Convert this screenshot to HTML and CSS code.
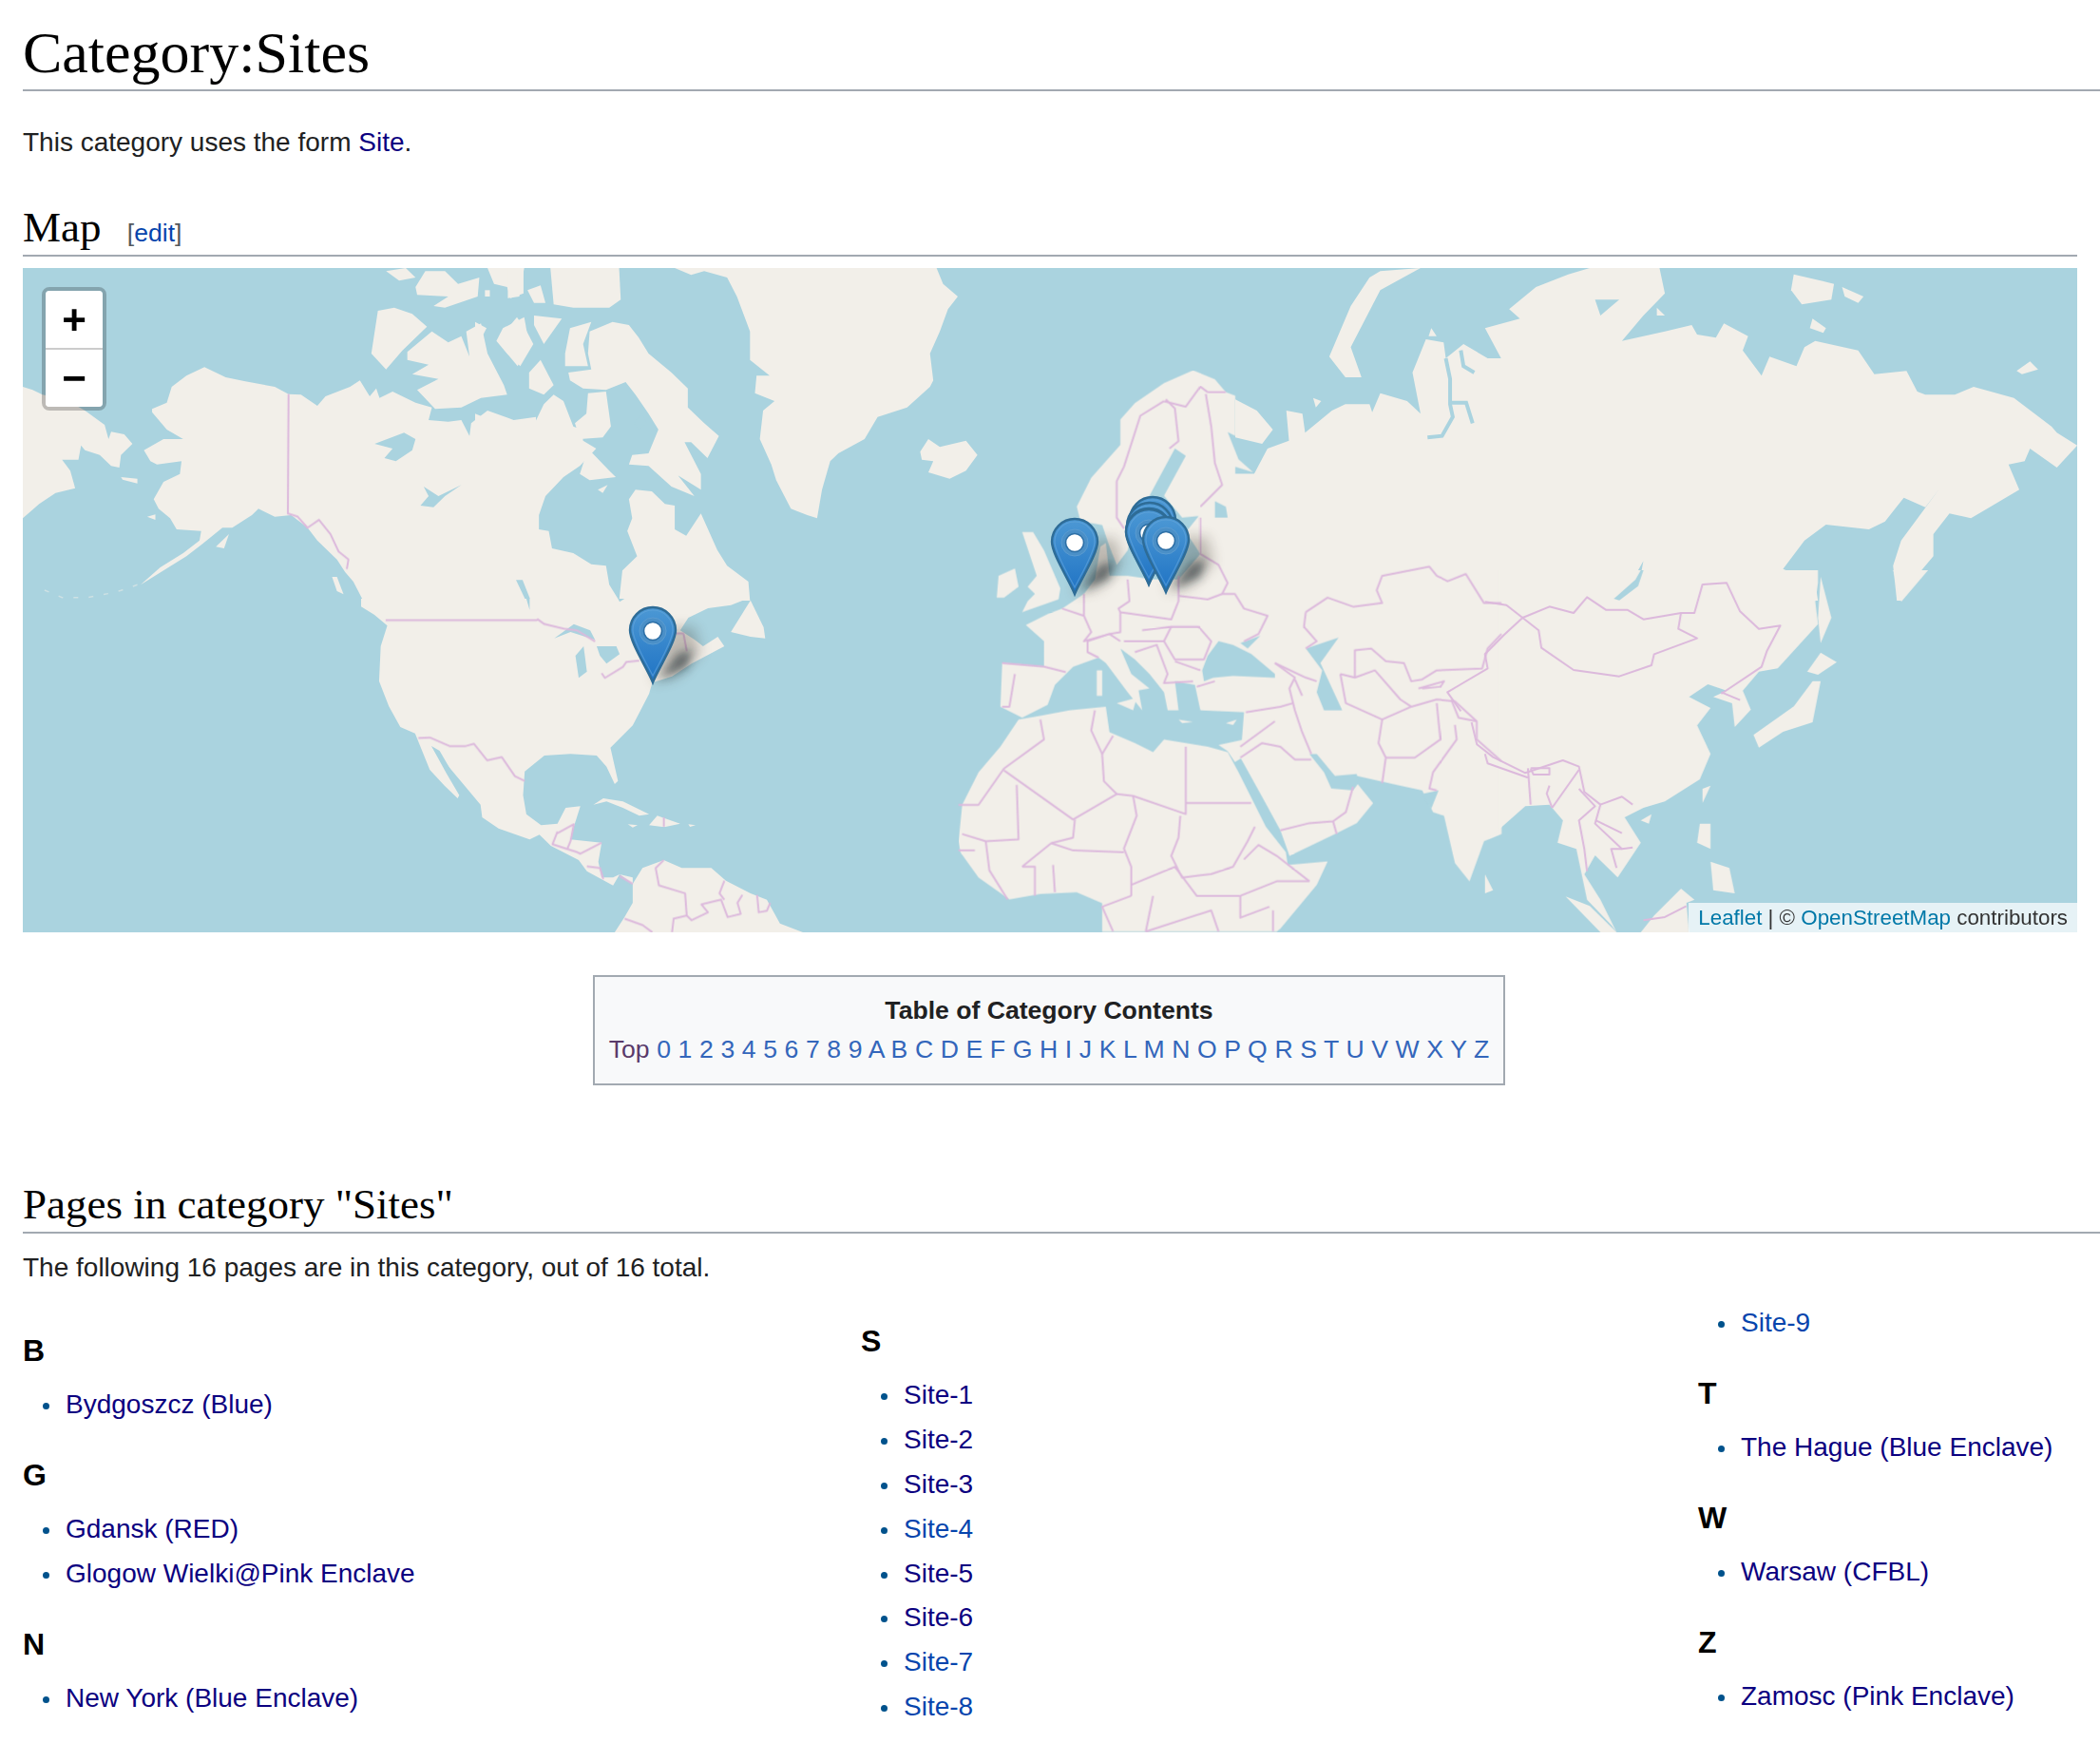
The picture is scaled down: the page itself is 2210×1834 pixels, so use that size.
FILE: index.html
```html
<!DOCTYPE html>
<html lang="en">
<head>
<meta charset="utf-8">
<title>Category:Sites</title>
<link rel="stylesheet" href="styles.css">
</head>
<body>
<main class="content">
  <h1 class="page-title">Category:Sites</h1>
  <p class="intro">This category uses the form <a class="visited" href="#">Site</a>.</p>
  <section class="map-section">
    <h2 class="section-title">Map <span class="editsection">[<a href="#">edit</a>]</span></h2>
    <div class="map">
      <svg class="map-art" viewBox="0 0 2162 699" preserveAspectRatio="none" aria-hidden="true">
        <defs>
          <linearGradient id="pinFill" x1="0" y1="0" x2="0" y2="1">
            <stop offset="0" stop-color="#4c98d4"/>
            <stop offset="1" stop-color="#1f73c4"/>
          </linearGradient>
          <filter id="soft" x="-60%" y="-60%" width="220%" height="220%"><feGaussianBlur stdDeviation="5"/></filter>
          <filter id="softer" x="-60%" y="-60%" width="220%" height="220%"><feGaussianBlur stdDeviation="7"/></filter>
          <g id="pinShadow">
            <path class="pin-wash" d="M0 0L16 -58L44 -58L50 -30L26 -6Z" filter="url(#softer)"/>
            <path class="pin-shadow" d="M8 -4L26 -30L42 -34L36 -16Z" filter="url(#soft)"/>
          </g>
          <g id="pin">
            <path class="pin-body" d="M0 0C-6 -15 -24 -42 -24 -55A24 24 0 1 1 24 -55C24 -42 6 -15 0 0Z"/>
            <path class="pin-glow" d="M0 -7C-6 -19 -21 -44 -21 -55A21 21 0 1 1 21 -55C21 -44 6 -19 0 -7Z"/>
            <circle class="pin-ring" cx="0" cy="-54" r="14"/>
            <circle class="pin-hole" cx="0" cy="-54" r="9.5"/>
          </g>
        </defs>
        <rect class="water" width="2162" height="699"/>
        <g class="base">
          <g transform="scale(.3444 .3333)">
            <polygon class="land" points="0,375 30,385 60,400 130,415 190,450 250,495 262,540 270,517 310,525 335,555 300,590 295,630 270,625 235,590 190,575 178,560 170,605 120,605 145,640 160,695 100,710 50,745 0,790"/>
            <polygon class="land" points="395,445 440,425 455,375 500,340 555,313 620,345 680,358 770,375 812,398 850,400 900,435 925,405 1000,375 1030,355 1060,405 1080,380 1090,410 1130,390 1200,425 1250,440 1240,480 1300,485 1340,480 1365,530 1370,490 1420,450 1500,480 1568,470 1568,1050 1040,1050 1010,990 985,960 960,920 900,860 870,820 820,780 770,785 720,760 700,780 640,820 610,820 550,870 500,910 430,955 360,1000 420,945 490,900 540,860 545,830 470,825 450,790 415,760 400,730 430,675 480,650 485,610 410,620 390,610 370,575 430,540 490,540 440,510 395,455"/>
            <polyline class="isles" points="350,1000 300,1018 260,1028 200,1040 120,1040 50,1010"/>
            <polygon class="land" points="1085,135 1135,125 1190,145 1235,185 1160,260 1110,320 1065,270"/>
            <polygon class="land" points="1175,265 1250,200 1300,235 1340,215 1365,280 1355,200 1400,175 1420,270 1470,370 1480,400 1400,410 1340,440 1260,445 1205,385 1270,350 1190,335 1240,305 1175,290"/>
            <polygon class="land" points="1110,10 1170,0 1200,30 1150,40"/>
            <polygon class="land" points="1200,60 1230,10 1290,10 1330,50 1395,30 1390,90 1290,125 1255,120 1300,90 1205,85"/>
            <polygon class="land" points="1420,0 1530,0 1530,80 1490,95 1480,60 1440,50"/>
            <polygon class="land" points="1450,230 1510,155 1540,200 1560,240 1520,310 1480,270"/>
            <polygon class="land" points="300,660 350,665 350,680 305,668"/>
            <polygon class="land" points="590,880 630,840 615,885"/>
            <polygon class="land" points="380,785 405,778 405,795"/>
            <polygon class="land" points="945,975 960,975 980,1030 960,1020"/>
            <polygon class="water" points="1075,555 1165,520 1200,540 1190,575 1140,610 1105,600 1130,570"/>
            <polygon class="water" points="1215,750 1240,720 1225,690 1270,720 1340,685 1290,720 1255,755"/>
            <polygon class="water" points="1500,985 1520,980 1545,1050 1530,1050"/>
          </g>
          <g transform="translate(476 0) scale(.3444 .3333)">
            <polygon class="land" points="0,460 60,485 130,485 175,505 210,430 240,400 270,420 300,500 325,510 330,545 370,570 320,625 270,660 215,720 195,780 195,825 225,830 235,885 300,900 355,935 400,940 410,1000 440,1050 0,1050"/>
            <polygon class="land" points="440,1050 450,955 495,910 465,830 480,790 470,730 490,700 540,705 580,745 610,750 610,825 645,845 690,775 740,890 770,940 835,990 840,1050"/>
            <polygon class="land" points="350,200 420,170 470,180 500,220 530,270 600,330 650,380 650,440 700,490 745,530 710,600 660,550 640,550 690,650 690,700 620,655 670,720 600,690 530,625 470,620 480,590 530,585 560,510 530,460 490,400 460,360 400,385 330,380 290,355 285,330 355,320 345,270"/>
            <polygon class="land" points="230,0 440,0 445,100 410,125 300,125 240,115"/>
            <polygon class="land" points="275,270 290,190 355,170 330,240 345,310 275,310"/>
            <polygon class="land" points="180,150 265,160 210,240 180,180"/>
            <polygon class="land" points="165,330 200,290 240,370 210,400 165,380"/>
            <polygon class="land" points="85,190 150,155 165,240 130,310 65,230"/>
            <polygon class="land" points="320,650 345,570 410,640 430,660 350,670"/>
            <polygon class="land" points="345,395 400,390 415,500 390,535 320,540 305,490 340,460"/>
            <polygon class="land" points="375,700 405,685 390,710"/>
            <polygon class="land" points="0,170 35,190 20,220 0,190"/>
            <polygon class="land" points="100,0 150,0 135,90 100,95"/>
            <polygon class="land" points="160,70 200,55 215,110 180,110"/>
            <polygon class="land" points="30,70 45,70 45,90 30,90"/>
            <polygon class="land" points="610,0 1410,0 1430,50 1475,90 1445,130 1420,200 1390,270 1400,355 1390,375 1320,440 1230,470 1190,540 1110,585 1085,610 1060,700 1045,790 1015,780 965,760 920,670 905,620 870,540 880,450 915,420 855,395 860,340 900,340 840,290 840,200 800,90 770,30 700,10 660,22"/>
            <polygon class="land" points="1360,580 1385,540 1420,565 1500,545 1535,590 1500,640 1450,665 1385,645 1400,610 1365,605"/>
            <polygon class="water" points="485,490 510,460 525,490 500,510"/>
            <polygon class="water" points="125,985 145,985 170,1050 155,1050"/>
          </g>
          <g transform="translate(356 348) scale(.3444 .3333)">
            <polygon class="land" points="0,25 40,50 80,85 60,150 55,260 85,340 120,405 165,425 210,540 255,590 295,630 300,620 260,550 215,465 300,570 365,650 370,690 420,725 515,760 545,745 580,780 665,825 690,860 770,905 790,870 830,900 830,880 790,870 770,880 735,880 725,830 735,770 640,760 650,720 670,655 625,660 600,710 550,715 505,680 495,620 500,545 560,495 640,490 720,495 750,530 775,585 785,575 762,470 830,400 855,350 880,300 890,265 950,245 1010,205 1110,150 1090,120 1045,150 1020,130 975,100 1000,60 1060,30 1130,20 1180,0 0,0"/>
            <polygon class="land" points="830,900 860,850 925,825 980,850 1070,850 1115,890 1190,930 1240,950 1280,1025 1350,1053 775,1053 805,1005 830,960"/>
            <polygon class="land" points="1130,105 1190,5 1230,90 1235,125 1190,120"/>
            <polygon class="land" points="710,650 740,630 800,640 880,680 850,685 800,660 750,640"/>
            <polygon class="land" points="880,715 905,685 975,710 930,720 920,720"/>
            <polygon class="land" points="815,712 845,715 830,722"/>
            <polygon class="land" points="1000,712 1022,715 1005,720"/>
            <polygon class="water" points="590,125 650,80 700,100 715,130 640,105"/>
            <polygon class="water" points="655,180 680,150 690,230 665,250"/>
            <polygon class="water" points="720,150 780,150 790,175 750,205 730,180"/>
            <polygon class="water" points="215,465 240,480 285,560 265,550"/>
            <polygon class="water" points="505,0 515,0 515,35"/>
            <polygon class="water" points="785,0 805,0 790,10"/>
          </g>
          <g transform="translate(956 98) scale(.3827)">
            <polygon class="land" points="400,400 440,320 520,230 520,160 560,115 640,60 720,25 780,50 810,85 836,95 836,205 815,195 845,270 885,305 836,290 836,310 1568,310 1568,1300 1520,1320 1480,1430 1440,1380 1410,1250 1380,1240 1350,1180 1280,1165 1170,1140 1170,1160 1215,1215 1170,1270 1110,1300 985,1360 960,1290 900,1180 850,1090 855,1030 860,965 740,960 725,890 670,880 680,960 650,960 640,910 600,860 560,820 520,790 550,860 600,900 570,905 580,960 540,910 480,830 460,815 390,840 340,890 320,945 250,980 190,950 195,830 310,840 310,770 260,725 320,695 360,680 420,640 450,600 465,510 480,500 490,590 540,590 610,600 680,600 740,530 700,470 740,420 800,420 690,430 640,370 700,260 670,240 600,370 560,430 540,520 510,560 490,510 470,450 410,440"/>
            <polygon class="land" points="240,985 300,975 380,960 480,950 490,1020 560,1050 610,1075 640,1040 700,1050 760,1060 815,1075 845,1130 880,1200 920,1280 975,1350 980,1385 1090,1375 1060,1440 960,1560 950,1568 470,1568 470,1490 400,1460 300,1465 215,1480 130,1420 80,1350 75,1320 85,1220 130,1130 190,1060"/>
            <polygon class="land" points="790,1055 860,1040 855,1090 835,1102 815,1072"/>
            <polygon class="land" points="250,470 280,470 310,520 355,625 350,655 250,690 265,660 285,640 265,620 290,590 270,530"/>
            <polygon class="land" points="180,650 185,590 230,570 240,620 200,650"/>
            <polygon class="land" points="455,850 470,850 470,920 455,920"/>
            <polygon class="land" points="510,940 565,925 555,960"/>
            <polygon class="land" points="680,985 720,992 690,995"/>
            <polygon class="land" points="810,995 840,985 830,1000"/>
            <polygon class="water" points="745,850 760,810 790,770 830,780 880,805 945,860 945,870 830,865 775,870 750,880"/>
            <polygon class="water" points="850,775 905,755 870,790"/>
            <polygon class="water" points="1030,790 1120,760 1070,830 1130,960 1080,960 1060,910 1075,850"/>
            <polygon class="water" points="1040,1080 1060,1080 1110,1140 1170,1135 1175,1160 1160,1180 1100,1175 1080,1130"/>
            <polygon class="water" points="780,385 810,400 815,430 780,430"/>
            <polygon class="water" points="1395,1180 1375,1230 1350,1190"/>
          </g>
          <g transform="translate(1276 0) scale(.5651 .3333)">
            <polygon class="land" points="0,415 40,450 70,510 50,555 0,535"/>
            <polygon class="land" points="345,0 270,70 215,250 235,345 205,345 175,280 190,220 215,120 250,30 270,10"/>
            <polygon class="land" points="0,1050 0,650 35,650 60,570 100,545 95,450 125,460 130,520 180,450 205,430 250,430 255,455 270,395 320,420 345,460 330,330 355,225 388,235 392,285 425,240 470,285 495,285 465,190 530,160 510,130 560,60 620,20 660,0 790,0 800,80 760,150 720,230 800,200 850,180 860,210 895,220 910,175 955,215 945,260 980,340 995,280 1045,310 1060,250 1080,230 1160,260 1190,335 1250,325 1270,390 1285,400 1340,400 1375,375 1450,410 1520,500 1530,520 1568,560 1530,630 1480,570 1470,610 1440,620 1460,700 1370,790 1330,775 1300,840 1300,910 1275,960 1240,1050 1232,1050 1225,940 1240,860 1310,700 1285,755 1245,725 1210,800 1180,825 1100,810 1060,860 1020,950 1080,990 1085,1050"/>
            <polygon class="land" points="1040,20 1090,40 1115,50 1110,100 1055,115 1035,70"/>
            <polygon class="land" points="1130,60 1170,90 1160,110 1135,90"/>
            <polygon class="land" points="1075,160 1100,190 1095,205 1070,190"/>
            <polygon class="land" points="1455,325 1480,295 1495,320 1465,335"/>
            <polygon class="land" points="145,410 160,420 150,440"/>
            <polygon class="land" points="785,125 800,150 785,150"/>
            <polygon class="land" points="365,190 375,215 360,215"/>
            <polygon class="water" points="670,100 715,100 680,150"/>
            <polygon class="water" points="760,925 755,970 715,1045 705,1040 740,985"/>
            <polyline class="river" points="392,285 400,350 400,430 405,470 385,530 358,535"/>
            <polyline class="river" points="400,425 430,425 442,490"/>
            <polyline class="river" points="420,260 425,310 445,330"/>
          </g>
          <g transform="translate(1276 318) scale(.5651 .3333)">
            <polygon class="land" points="490,0 1085,0 1085,40 1080,100 1085,170 1010,310 975,320 945,380 960,440 930,495 925,420 890,400 915,380 880,360 845,400 885,435 860,490 885,580 865,660 800,730 760,750 725,780 755,860 712,970 670,900 650,960 680,1040 710,1143 700,1120 655,1040 635,880 600,860 610,790 585,740 540,745 470,850 490,835"/>
            <polygon class="land" points="1225,0 1290,0 1240,100"/>
            <polygon class="land" points="1090,20 1110,150 1090,230 1085,150"/>
            <polygon class="land" points="1065,320 1090,260 1120,290 1085,330"/>
            <polygon class="land" points="1075,350 1090,350 1075,480 1020,510 975,560 965,520 1040,430"/>
            <polygon class="land" points="870,690 885,680 870,735"/>
            <polygon class="land" points="755,790 775,770 770,800"/>
            <polygon class="land" points="865,800 885,800 885,880 860,860"/>
            <polygon class="land" points="885,920 920,940 930,1020 890,1010"/>
            <polygon class="land" points="465,960 480,1010 465,1020"/>
            <polygon class="land" points="615,1030 660,1060 710,1143 680,1143"/>
            <polygon class="land" points="755,1143 780,1090 830,1005 855,1040 840,1050 845,1143"/>
            <polygon class="water" points="705,90 745,30 755,0 760,0 750,50 715,95"/>
          </g>
        </g>
        <g class="borders">
          <g transform="scale(.3444 .3333)">
            <polyline points="812,398 810,775 840,785 870,820 905,795 940,840 965,895 995,920 990,950"/>
          </g>
          <g transform="translate(356 348) scale(.3444 .3333)">
            <polyline points="75,68 535,68 540,65 560,80 620,95 660,100 715,135"/>
            <polyline points="735,235 745,250 800,215 810,200 850,195"/>
            <polyline points="960,110 985,110 995,165"/>
            <polyline points="175,440 210,438 270,465 320,465 345,458 385,510 430,500 470,560 500,575"/>
            <polyline points="600,740 650,712 640,765 630,790 585,775 600,735"/>
            <polyline points="630,790 660,800 670,805 735,770"/>
            <polyline points="690,845 730,850 740,885"/>
            <polyline points="790,875 830,900"/>
            <polyline points="925,825 900,850 910,905 990,930 995,1000 955,1010 950,1053"/>
            <polyline points="995,1000 1010,1015 1060,990 1040,965 1100,950 1120,1005 1160,995 1150,960 1165,935"/>
            <polyline points="1210,935 1215,990 1240,985 1250,960"/>
            <polyline points="1110,890 1095,930 1110,950"/>
            <polyline points="805,1010 860,1030 890,1053"/>
            <polyline points="925,690 925,720"/>
          </g>
          <g transform="translate(956 98) scale(.3827)">
            <polyline points="640,110 575,150 530,290 510,330 510,430 530,460"/>
            <polyline points="645,105 670,130 680,220 655,240"/>
            <polyline points="640,110 700,125 740,70 760,85"/>
            <polyline points="755,90 770,180 780,280 800,340 740,400"/>
            <polyline points="760,85 810,85"/>
            <polyline points="740,430 740,530 790,560 815,610 800,640 835,640 860,680 925,700 900,750 860,770"/>
            <polyline points="680,645 760,655 800,640"/>
            <polyline points="680,590 680,660 660,710 590,700 520,690 515,680 545,660 540,600"/>
            <polyline points="420,640 420,700 440,745 420,770 490,750 520,745 520,690"/>
            <polyline points="360,680 420,700"/>
            <polyline points="430,770 430,800 460,815"/>
            <polyline points="195,830 310,840 370,855"/>
            <polyline points="230,860 215,950 195,950"/>
            <polyline points="430,770 490,750 520,770"/>
            <polyline points="580,740 660,730 640,770 570,770 530,770"/>
            <polyline points="640,770 670,820 750,820 770,770 735,730 660,730"/>
            <polyline points="670,825 740,850"/>
            <polyline points="560,800 620,780 650,860 640,885 720,880"/>
            <polyline points="730,895 780,880"/>
            <polyline points="945,830 1000,870 985,900 1000,960 1020,1020 1045,1080"/>
            <polyline points="865,965 960,950 995,940"/>
            <polyline points="850,1060 945,990"/>
            <polyline points="850,1090 910,1050 960,1060 1000,1095 1045,1095"/>
            <polyline points="960,1290 1040,1270 1105,1265 1140,1240 1160,1170"/>
            <polyline points="1105,1265 1115,1300"/>
            <polyline points="945,830 1030,870 1060,880"/>
            <polyline points="1000,875 1020,920"/>
            <polyline points="1030,690 1025,730 1060,770 1030,790"/>
            <polyline points="1030,690 1090,650 1160,675 1240,665 1225,630 1240,590 1370,565 1390,590 1420,605 1470,585 1520,665 1568,665"/>
            <polyline points="1125,860 1165,870 1165,795 1210,790 1250,825 1300,830 1320,880 1350,875 1390,850 1515,845 1530,790 1568,750"/>
            <polyline points="1125,860 1140,940 1240,985 1320,950 1390,930 1440,935 1500,990 1500,1040 1568,1100"/>
            <polyline points="1240,985 1230,1050 1250,1090 1240,1160"/>
            <polyline points="1250,1090 1330,1090 1400,1040 1390,940"/>
            <polyline points="1440,1000 1445,1040 1380,1130 1370,1175 1390,1180"/>
            <polyline points="1165,870 1220,850 1290,930 1320,950"/>
            <polyline points="1340,900 1410,880 1400,895 1350,900"/>
            <polyline points="1430,930 1450,980 1500,990"/>
            <polyline points="300,985 310,1040 200,1120 130,1220 75,1220"/>
            <polyline points="450,960 440,1015 470,1080 475,1155 510,1190 390,1260 200,1125"/>
            <polyline points="470,1080 500,1030"/>
            <polyline points="700,1060 700,1245 555,1195 510,1190"/>
            <polyline points="700,1215 880,1215"/>
            <polyline points="235,1165 240,1315 150,1320 85,1300"/>
            <polyline points="395,1260 390,1310 330,1325 250,1390"/>
            <polyline points="555,1195 565,1250 530,1340 550,1390 550,1470"/>
            <polyline points="685,1250 680,1310 660,1360 690,1420 770,1410 830,1390 870,1320 890,1280"/>
            <polyline points="330,1325 390,1345 530,1350"/>
            <polyline points="250,1390 285,1390 285,1470"/>
            <polyline points="335,1385 340,1460"/>
            <polyline points="150,1320 160,1400 210,1480"/>
            <polyline points="550,1440 670,1390 730,1470 850,1470"/>
            <polyline points="850,1470 950,1430 1040,1430"/>
            <polyline points="860,1370 900,1330 950,1360 1040,1430"/>
            <polyline points="550,1470 470,1500 500,1568"/>
            <polyline points="610,1470 590,1568"/>
            <polyline points="590,1568 770,1510 790,1568"/>
            <polyline points="850,1470 850,1530 930,1500"/>
            <polyline points="940,1510 940,1568"/>
            <polyline points="75,1345 120,1345"/>
          </g>
          <g transform="translate(1276 318) scale(.5651 .3333)">
            <polyline points="465,100 505,110 535,150 585,115 630,135 655,85 690,125 730,125 760,155 830,135 855,135 870,45 915,40 940,130 975,185 1015,175 990,255 980,305 905,390"/>
            <polyline points="830,135 825,185 860,215 780,265 775,300 715,335 630,315 570,245 565,190 535,150"/>
            <polyline points="535,150 500,205 465,265 470,310 420,360 395,385 420,445"/>
            <polyline points="440,480 450,550 480,590 540,640 610,600 640,620 650,700 680,740 720,715 740,740"/>
            <polyline points="465,580 470,610 545,655"/>
            <polyline points="550,625 585,625 585,645 555,645 550,625"/>
            <polyline points="545,625 550,740"/>
            <polyline points="585,680 580,705 590,750"/>
            <polyline points="590,750 640,630"/>
            <polyline points="640,690 670,745 640,790 650,880 655,950"/>
            <polyline points="680,740 670,800 720,880 740,875"/>
            <polyline points="672,790 720,830"/>
            <polyline points="720,880 700,880 710,940"/>
            <polyline points="905,385 940,410"/>
            <polyline points="760,1105 800,1095 840,1060"/>
          </g>
        </g>
        <g transform="translate(663 436)">
          <use href="#pinShadow"/><use href="#pin"/>
        </g>
        <g transform="translate(1107 343)">
          <use href="#pinShadow"/><use href="#pin"/>
        </g>
        <use href="#pinShadow" x="1203" y="341"/>
        <use href="#pin" x="1189" y="320"/>
        <use href="#pin" x="1186" y="326"/>
        <use href="#pin" x="1185" y="332"/>
        <use href="#pin" x="1185" y="333"/>
        <use href="#pin" x="1203" y="341"/>
      </svg>
      <div class="zoom-control">
        <a class="zoom-btn zoom-in" href="#">+</a>
        <a class="zoom-btn" href="#">−</a>
      </div>
      <div class="attribution"><a href="#">Leaflet</a> | © <a href="#">OpenStreetMap</a> contributors</div>
    </div>
  </section>
  <nav class="toc">
    <div class="toc-title">Table of Category Contents</div>
    <div class="toc-list"><a class="toc-top" href="#">Top</a> <a href="#">0</a> <a href="#">1</a> <a href="#">2</a> <a href="#">3</a> <a href="#">4</a> <a href="#">5</a> <a href="#">6</a> <a href="#">7</a> <a href="#">8</a> <a href="#">9</a> <a href="#">A</a> <a href="#">B</a> <a href="#">C</a> <a href="#">D</a> <a href="#">E</a> <a href="#">F</a> <a href="#">G</a> <a href="#">H</a> <a href="#">I</a> <a href="#">J</a> <a href="#">K</a> <a href="#">L</a> <a href="#">M</a> <a href="#">N</a> <a href="#">O</a> <a href="#">P</a> <a href="#">Q</a> <a href="#">R</a> <a href="#">S</a> <a href="#">T</a> <a href="#">U</a> <a href="#">V</a> <a href="#">W</a> <a href="#">X</a> <a href="#">Y</a> <a href="#">Z</a></div>
  </nav>
  <h2 class="section-title pages-title">Pages in category "Sites"</h2>
  <p class="pages-count">The following 16 pages are in this category, out of 16 total.</p>
  <div class="columns">
    <div class="column col-a">
      <h3>B</h3>
      <ul><li><a class="visited" href="#">Bydgoszcz (Blue)</a></li></ul>
      <h3>G</h3>
      <ul><li><a class="visited" href="#">Gdansk (RED)</a></li><li><a class="visited" href="#">Glogow Wielki@Pink Enclave</a></li></ul>
      <h3>N</h3>
      <ul><li><a class="visited" href="#">New York (Blue Enclave)</a></li></ul>
    </div>
    <div class="column col-b">
      <h3>S</h3>
      <ul>
        <li><a class="visited" href="#">Site-1</a></li>
        <li><a class="visited" href="#">Site-2</a></li>
        <li><a class="visited" href="#">Site-3</a></li>
        <li><a href="#">Site-4</a></li>
        <li><a class="visited" href="#">Site-5</a></li>
        <li><a class="visited" href="#">Site-6</a></li>
        <li><a href="#">Site-7</a></li>
        <li><a href="#">Site-8</a></li>
      </ul>
    </div>
    <div class="column col-c">
      <ul><li><a href="#">Site-9</a></li></ul>
      <h3>T</h3>
      <ul><li><a class="visited" href="#">The Hague (Blue Enclave)</a></li></ul>
      <h3>W</h3>
      <ul><li><a class="visited" href="#">Warsaw (CFBL)</a></li></ul>
      <h3>Z</h3>
      <ul><li><a class="visited" href="#">Zamosc (Pink Enclave)</a></li></ul>
    </div>
  </div>
</main>
</body>
</html>
```

FILE: styles.css
```css
html, body { margin: 0; padding: 0; background: #fff; }
body { font-family: "Liberation Sans", Arial, sans-serif; font-size: 28px; line-height: 42px; color: #202122; overflow-x: hidden; }
a { color: #0645ad; text-decoration: none; }
a.visited { color: #0b0080; }
.content { padding-left: 24px; }

.page-title { margin: 0; padding-top: 16px; font: 400 62px/78px "Liberation Serif", "Times New Roman", serif; color: #000; border-bottom: 2px solid #a2a9b1; }
.intro { margin: 33px 0 0; }

.map-section { margin-top: 37px; padding-right: 24px; }
.section-title { margin: 0; padding-top: 3px; font: 400 45px/57px "Liberation Serif", "Times New Roman", serif; color: #000; border-bottom: 2px solid #a2a9b1; }
.editsection { margin-left: 16px; font: 400 26.6px/42px "Liberation Sans", Arial, sans-serif; color: #54595d; }

.map { position: relative; margin-top: 12px; height: 699px; overflow: hidden; background: #aad3df; }
.map-art { display: block; width: 100%; height: 100%; }
.water { fill: #aad3df; }
.land { fill: #f2efe9; }
.river { fill: none; stroke: #aad3df; stroke-width: 4; vector-effect: non-scaling-stroke; }
.isles { fill: none; stroke: #f2efe9; stroke-width: 1.5; stroke-dasharray: 5 11; opacity: .5; vector-effect: non-scaling-stroke; }
.base { filter: blur(.6px); }
.borders { filter: blur(.35px); }
.borders polyline { fill: none; stroke: #dcb9dc; stroke-width: 2; stroke-linejoin: round; vector-effect: non-scaling-stroke; }
.pin-wash { fill: #3a3228; opacity: .28; }
.pin-shadow { fill: #12262e; opacity: .55; }
.pin-body { fill: url(#pinFill); stroke: #2e6c97; stroke-width: 2.4; }
.pin-glow { fill: none; stroke: #6aa9dc; stroke-width: 1.2; opacity: .55; }
.pin-ring { fill: #4a8fc7; stroke: #5a9cd2; }
.pin-hole { fill: #fff; stroke: #2d6fa6; stroke-width: 1.6; }

.zoom-control { position: absolute; left: 20px; top: 20px; width: 60px; border: 4px solid rgba(0, 0, 0, .22); border-radius: 8px; background-clip: padding-box; }
.zoom-btn { display: block; height: 60px; background: #fff; color: #000; font: 700 44px/60px "Liberation Sans", Arial, sans-serif; text-align: center; }
.zoom-in { height: 60px; line-height: 62px; border-bottom: 2px solid #ccc; border-radius: 4px 4px 0 0; }
.zoom-btn:last-child { border-radius: 0 0 4px 4px; }
.attribution { position: absolute; right: 0; bottom: 0; height: 31px; padding: 0 10px; background: rgba(255, 255, 255, .7); color: #333; font-size: 22.35px; line-height: 31px; white-space: nowrap; }
.attribution a { color: #0078a8; }

.toc { width: 960px; box-sizing: border-box; margin: 45px 0 0 600px; padding: 15px 0 15px; background: #f8f9fa; border: 2px solid #a2a9b1; text-align: center; font-size: 26.6px; line-height: 41px; }
.toc-title { font-weight: 700; }
.toc-list { white-space: nowrap; word-spacing: .2px; }
.toc-list a { color: #36b; }
.toc-list a.toc-top { color: #5a3a6a; }

.pages-title { margin-top: 94px; }
.pages-count { margin: 15px 0 0; }

.columns { display: grid; grid-template-columns: 882px 881px 1fr; }
.col-a { padding-top: 45px; }
.col-b { padding-top: 35px; }
.col-c { padding-top: 16px; }
.column h3 { margin: 0; font-size: 32px; line-height: 42px; color: #000; font-weight: 700; }
.column ul { margin: 15px 0 32px; padding: 0; list-style: none; }
.col-c ul:first-child { margin-top: 0; }
.column li { position: relative; margin-bottom: 4.9px; padding-left: 45px; }
.column li:last-child { margin-bottom: 0; }
.column li::before { content: ""; position: absolute; left: 21px; top: 19px; width: 7px; height: 7px; border-radius: 50%; background: #00528c; }
```
